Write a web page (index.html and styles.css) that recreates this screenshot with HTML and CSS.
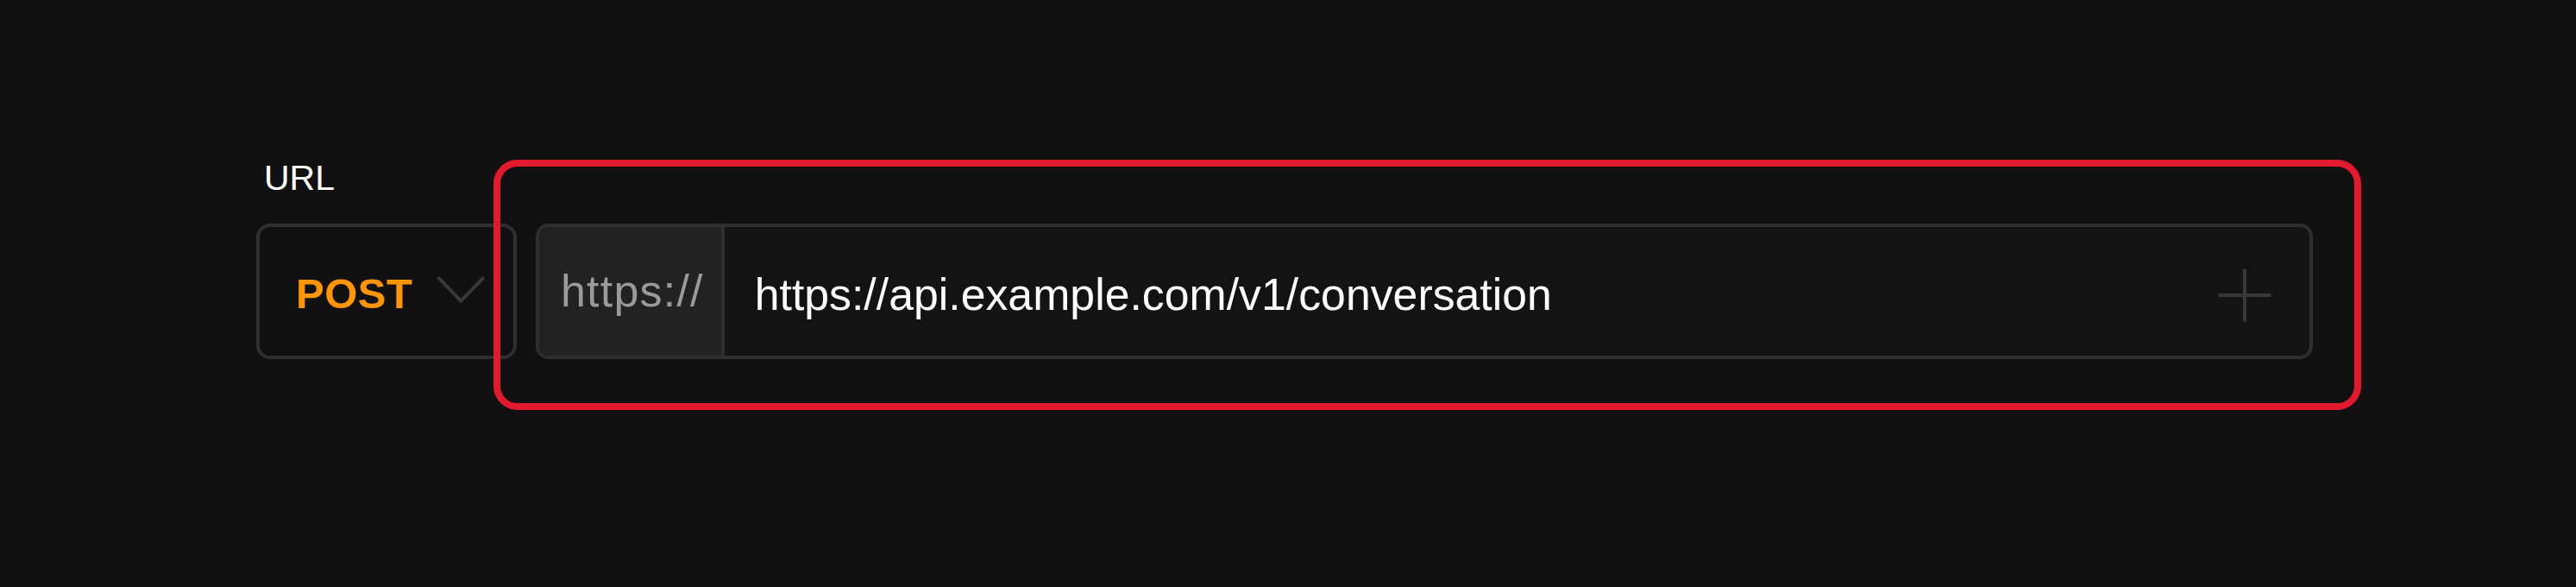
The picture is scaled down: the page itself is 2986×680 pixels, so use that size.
FILE: index.html
```html
<!DOCTYPE html>
<html lang="en">
<head>
<meta charset="utf-8">
<title>URL</title>
<link rel="stylesheet" href="styles.css">
</head>
<body>
<div class="field">
  <div class="label">URL</div>
  <div class="row">
    <div class="method">
      <span class="method-name">POST</span>
      <svg class="chevron" width="58" height="34" viewBox="0 0 58 34"><polyline points="3,3 29,30 55,3" fill="none" stroke="#393939" stroke-width="4" stroke-linecap="round" stroke-linejoin="round"/></svg>
    </div>
    <div class="url-input">
      <div class="prefix">https://</div>
      <div class="value">https://api.example.com/v1/conversation</div>
      <svg class="plus" width="62" height="62" viewBox="0 0 62 62"><path d="M31 2v58M2 31h58" fill="none" stroke="#393939" stroke-width="4" stroke-linecap="round"/></svg>
    </div>
  </div>
</div>
<div class="highlight"></div>
</body>
</html>
```

FILE: styles.css
```css
html, body {
  margin: 0;
  padding: 0;
  background: #111111;
  height: 680px;
  overflow: hidden;
}
body {
  font-family: "Liberation Sans", Arial, sans-serif;
  position: relative;
}
.field {
  padding: 182px 0 0 297px;
  width: 2384px;
}
.label {
  color: #ffffff;
  font-size: 41px;
  line-height: 48px;
  padding-left: 9px;
  margin-bottom: 29px;
}
.row {
  display: flex;
  gap: 22px;
  height: 157px;
}
.method {
  box-sizing: border-box;
  width: 302px;
  border: 4px solid #2f2f2f;
  border-radius: 16px;
  display: flex;
  align-items: center;
  padding: 4px 32px 0 42px;
  gap: 28px;
}
.method-name {
  color: #ff9500;
  font-weight: bold;
  font-size: 49px;
  letter-spacing: 0.5px;
}
.chevron {
  display: block;
  margin-top: -8px;
}
.url-input {
  flex: 1;
  box-sizing: border-box;
  border: 4px solid #2f2f2f;
  border-radius: 15px;
  background: #131313;
  display: flex;
  align-items: stretch;
  overflow: hidden;
}
.prefix {
  background: #222222;
  color: #9a9a9a;
  font-size: 52px;
  letter-spacing: 1.2px;
  border-right: 4px solid #2f2f2f;
  display: flex;
  align-items: center;
  padding: 0 20px 1px 25px;
}
.value {
  flex: 1;
  color: #ffffff;
  font-size: 51.8px;
  display: flex;
  align-items: center;
  padding: 7px 0 0 35px;
}
.plus {
  align-self: center;
  margin: 8px 44px 0 0;
}
.highlight {
  position: absolute;
  left: 572px;
  top: 185px;
  width: 2165px;
  height: 290px;
  box-sizing: border-box;
  border: 8px solid #e3192d;
  border-radius: 28px;
}
```
